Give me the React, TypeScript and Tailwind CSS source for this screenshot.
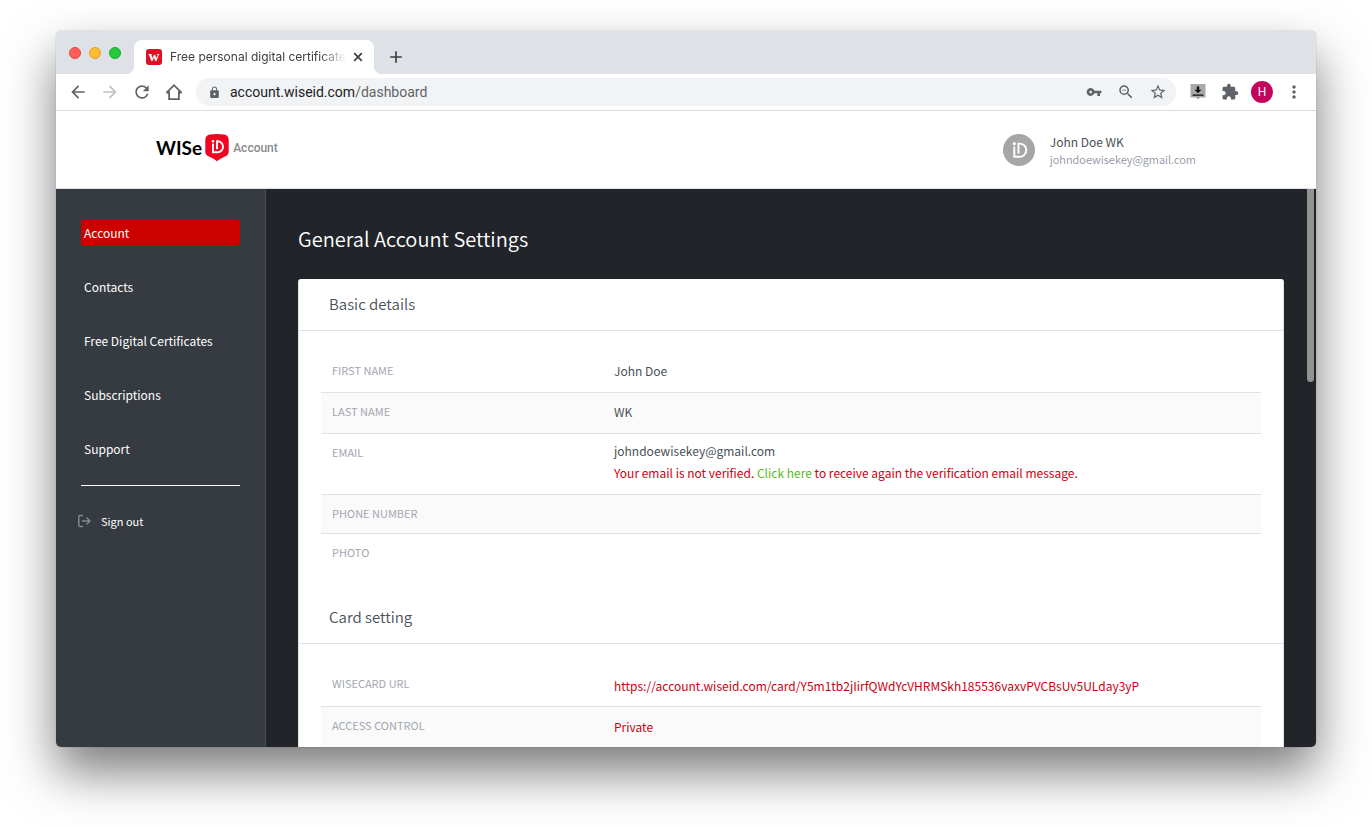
import React from "react";
import {
  MdAdd,
  MdArrowBack,
  MdArrowForward,
  MdExtension,
  MdLock,
  MdMoreVert,
  MdRefresh,
  MdStarBorder,
  MdVpnKey,
  MdZoomOut,
} from "react-icons/md";

const UI = "font-['Noto_Sans_CJK_SC','Noto_Sans',sans-serif]";

function HomeIcon() {
  return (
    <svg width="18" height="18" viewBox="0 0 18 18" fill="none" stroke="currentColor" strokeWidth="1.8" aria-hidden="true">
      <path d="M1.6 9.7 9 2.2l7.4 7.5M4.1 8.2v8h9.8v-8M1.2 9.5h3M13.8 9.5h3" />
    </svg>
  );
}

function CloseIcon() {
  return (
    <svg width="14" height="14" viewBox="0 0 14 14" fill="none" stroke="currentColor" strokeWidth="1.7" aria-hidden="true">
      <path d="M3.2 3.2l7.6 7.6M10.8 3.2l-7.6 7.6" />
    </svg>
  );
}

function DownloadExtensionIcon() {
  return (
    <svg width="16" height="16" viewBox="0 0 16 16" aria-hidden="true">
      <path d="M.5 0h15v13.4h-5.3L8 15.6l-2.2-2.2H.5z" fill="#a9a9a9" />
      <path d="M6.8 2.5h2.4v3.2h2.3L8 9.3 4.5 5.7h2.3zM2.5 10.6h11v1.2h-11z" fill="#111" />
    </svg>
  );
}

function SignOutIcon() {
  return (
    <svg width="14" height="14" viewBox="0 0 14 14" fill="none" stroke="#868a93" strokeWidth="1.4" strokeLinecap="round" strokeLinejoin="round" aria-hidden="true">
      <path d="M5.5 1.5H3a1.2 1.2 0 0 0-1.2 1.2v8.6A1.2 1.2 0 0 0 3 12.5h2.5M5.5 7h7.2M10 4l3 3-3 3" />
    </svg>
  );
}

function ShieldLogo() {
  return (
    <svg width="24" height="28" viewBox="0 0 24 28" aria-hidden="true">
      <path d="M5 .5Q12-.3 19 .5Q23.6 1 23.7 6v11.5Q23.7 21 20 22.6Q15 24.8 12 27.3Q9 24.8 4 22.6Q.3 21 .3 17.5V6Q.4 1 5 .5z" fill="#f10422" />
      <circle cx="8" cy="7.2" r="1.3" fill="#fff" />
      <path d="M8 9.6v8.6h4.6a5.4 5.4 0 0 0 0-10.9h-.6v7.9" fill="none" stroke="#fff" strokeWidth="1.9" />
    </svg>
  );
}

function Avatar() {
  return (
    <svg width="32" height="32" viewBox="0 0 32 32" aria-hidden="true">
      <circle cx="16" cy="16" r="16" fill="#a6a6a6" />
      <circle cx="11.3" cy="9.7" r="1.6" fill="#fff" />
      <path d="M11.3 12.6v10.2h5.4a6.6 6.6 0 0 0 0-13.2h-1.2v10" fill="none" stroke="#fff" strokeWidth="1.9" />
    </svg>
  );
}

function TabStrip() {
  return (
    <div className="flex h-[43px] shrink-0 items-end bg-[#dee1e6] font-[Inter,sans-serif]">
      <div className="flex gap-2 self-center pl-[13px] pr-[13px]">
        <button aria-label="Close window" className="size-3 rounded-full border border-[#e2463f] bg-[#ff5f57]" />
        <button aria-label="Minimize window" className="size-3 rounded-full border border-[#e0a02e] bg-[#febc2e]" />
        <button aria-label="Zoom window" className="size-3 rounded-full border border-[#12ac28] bg-[#28c840]" />
      </div>
      <div className="relative flex h-[34px] w-[240px] items-center rounded-t-lg bg-white pl-3 pr-2">
        <span className="absolute bottom-0 right-full size-2 bg-[radial-gradient(circle_at_0_0,#dee1e6_8px,#fff_8px)]" />
        <span className="absolute bottom-0 left-full size-2 bg-[radial-gradient(circle_at_100%_0,#dee1e6_8px,#fff_8px)]" />
        <span className="flex size-4 items-center justify-center rounded-[3px] bg-[#df1024] pb-0.5 font-['Liberation_Serif',serif] text-[15px] leading-4 font-bold text-white">w</span>
        <span className="ml-2 whitespace-nowrap text-xs text-[#3c4043] [mask-image:linear-gradient(to_right,#000_85%,transparent)]">
          Free personal digital certificate
        </span>
        <button aria-label="Close tab" className="absolute right-[9px] text-[#3c4043]"><CloseIcon /></button>
      </div>
      <button aria-label="New tab" className="mb-[7px] ml-3 text-[#3c4043]"><MdAdd size={20} /></button>
    </div>
  );
}

const slot = "flex h-5 w-5 items-center justify-center";

function Toolbar() {
  return (
    <div className="flex h-[37px] shrink-0 items-center border-b border-[#dadce0] bg-white pr-3 pl-3 text-[#5f6368]">
      <div className="flex gap-3">
        <button aria-label="Back"><MdArrowBack size={20} /></button>
        <button aria-label="Forward" className="text-[#bdc1c6]"><MdArrowForward size={20} /></button>
        <button aria-label="Reload"><MdRefresh size={20} /></button>
        <button aria-label="Home" className={slot}><HomeIcon /></button>
      </div>
      <div className="ml-3 flex h-7 flex-1 items-center rounded-full bg-[#f1f3f4] pr-2 pl-3">
        <MdLock size={13} />
        <a href="#dashboard" className="ml-[9px] flex-1 font-[Roboto,sans-serif] text-[14px] leading-5 text-[#5f6368]">
          <span className="text-[#202124]">account.wiseid.com</span>/dashboard
        </a>
        <div className="flex gap-3">
          <button aria-label="Passwords" className={slot}><MdVpnKey size={16} /></button>
          <button aria-label="Zoom out" className={slot}><MdZoomOut size={18} /></button>
          <button aria-label="Bookmark" className={slot}><MdStarBorder size={18} /></button>
        </div>
      </div>
      <div className="ml-3 flex items-center gap-3">
        <button aria-label="Downloader" className={slot}><DownloadExtensionIcon /></button>
        <button aria-label="Extensions" className={slot}><MdExtension size={18} /></button>
        <button aria-label="Profile" className="-mx-px flex size-[22px] items-center justify-center rounded-full bg-[#c2045c] font-[Roboto,sans-serif] text-xs text-white">H</button>
        <button aria-label="Menu" className={slot}><MdMoreVert size={20} /></button>
      </div>
    </div>
  );
}

function SiteHeader() {
  return (
    <header className="flex h-[78px] shrink-0 items-center justify-between border-b border-[#dee2e9] bg-white pr-[120px] pl-[100px]">
      <a href="#home" className="flex items-center pb-1">
        <span className="font-[Lato,sans-serif] text-[19px] leading-6 font-bold text-black">WISe</span>
        <span className="ml-[3px]"><ShieldLogo /></span>
        <span className="ml-1 font-[Roboto,sans-serif] text-[12px] leading-4 font-medium text-[#8a8a8a]">Account</span>
      </a>
      <div className="flex items-center gap-[15px]">
        <Avatar />
        <div>
          <div className="text-[12px] leading-[18px] text-[#495057]">John Doe WK</div>
          <div className="text-[11px] leading-4 font-[350] text-[#9295a2]">johndoewisekey@gmail.com</div>
        </div>
      </div>
    </header>
  );
}

const navItems = ["Account", "Contacts", "Free Digital Certificates", "Subscriptions", "Support"];

function Sidebar() {
  return (
    <nav className="w-[210px] shrink-0 border-r border-[#4b4d52] bg-[#363a41] pt-[31px] pr-[25px] pl-[25px]">
      <ul className="flex flex-col gap-7">
        {navItems.map((item) => (
          <li key={item}>
            <a
              href={"#" + item.toLowerCase().replaceAll(" ", "-")}
              className={
                item === "Account"
                  ? "block rounded-[3px] bg-[#cd0000] px-[3px] text-[12px] leading-[26px] text-white"
                  : "block rounded-[3px] px-[3px] text-[12px] leading-[26px] text-white"
              }
            >
              {item}
            </a>
          </li>
        ))}
      </ul>
      <hr className="mt-[23px] border-white" />
      <a href="#sign-out" className="-ml-1 mt-[23px] flex items-center gap-[10px] text-[11px] leading-6 text-white">
        <SignOutIcon />
        Sign out
      </a>
    </nav>
  );
}

type Row = { label: string; value?: React.ReactNode; cell: string };

function Section({ title, rows }: { title: string; rows: Row[] }) {
  return (
    <section>
      <h2 className="h-[52px] border-b border-[#dee2e9] pl-[30px] text-[15px] leading-[50px] font-[350] text-[#495057]">{title}</h2>
      <div className="px-[22px] pt-[21px] pb-5">
        <table className="w-full table-fixed border-separate border-spacing-0 text-left">
          <tbody>
            {rows.map((row) => (
              <tr key={row.label} className="group even:bg-[#fafafa]">
                <th scope="row" className="w-[30%] border-b border-[#dee2e9] pt-[9px] pl-[11px] align-top text-[11px] leading-[18px] font-normal text-[#a3a6b1] group-last:border-b-0">
                  {row.label}
                </th>
                <td className={"border-b border-[#dee2e9] pl-[11px] text-[12px] leading-[22px] text-[#495057] group-last:border-b-0 " + row.cell}>
                  {row.value}
                </td>
              </tr>
            ))}
          </tbody>
        </table>
      </div>
    </section>
  );
}

const basicRows: Row[] = [
  { label: "FIRST NAME", value: "John Doe", cell: "h-[41px] pb-0.5" },
  { label: "LAST NAME", value: "WK", cell: "h-[41px] pb-0.5" },
  {
    label: "EMAIL",
    value: (
      <>
        <div>johndoewisekey@gmail.com</div>
        <div className="text-[#cd0011]">
          Your email is not verified.{" "}
          <a href="#verify" className="text-[#5eba1f]">Click here</a> to receive again the verification email message.
        </div>
      </>
    ),
    cell: "pt-1.5 pb-[10px]",
  },
  { label: "PHONE NUMBER", cell: "h-[39px]" },
  { label: "PHOTO", cell: "h-[38px]" },
];

const cardRows: Row[] = [
  {
    label: "WISECARD URL",
    value: (
      <a href="#card" className="text-[#cd0011]">
        https://account.wiseid.com/card/Y5m1tb2jIirfQWdYcVHRMSkh185536vaxvPVCBsUv5ULday3yP
      </a>
    ),
    cell: "h-[42px]",
  },
  { label: "ACCESS CONTROL", value: <a href="#access" className="text-[#cd0011]">Private</a>, cell: "h-[41px] pb-0.5" },
];

export default function App() {
  return (
    <div className={"flex h-screen flex-col overflow-hidden bg-white px-14 pt-[31px] pb-20 " + UI}>
      <div className="flex min-h-0 flex-1 flex-col overflow-hidden rounded-[5px] shadow-[0_0_1px_rgba(0,0,0,0.5),0_25px_50px_rgba(0,0,0,0.52)]">
        <TabStrip />
        <Toolbar />
        <SiteHeader />
        <div className="relative flex min-h-0 flex-1">
          <Sidebar />
          <main className="min-w-0 flex-1 overflow-y-auto bg-[#212429] pr-8 pl-8 [scrollbar-width:none]">
            <h1 className="pt-[35px] pb-[25px] text-[20px] leading-[30px] font-[350] text-white">General Account Settings</h1>
            <div className="rounded-[3px] border-x border-[#dee2e9] bg-white">
              <Section title="Basic details" rows={basicRows} />
              <Section title="Card setting" rows={cardRows} />
            </div>
          </main>
          <div className="absolute top-0 right-0.5 h-[193px] w-[7px] rounded-b-full bg-[#929292]" />
        </div>
      </div>
    </div>
  );
}
